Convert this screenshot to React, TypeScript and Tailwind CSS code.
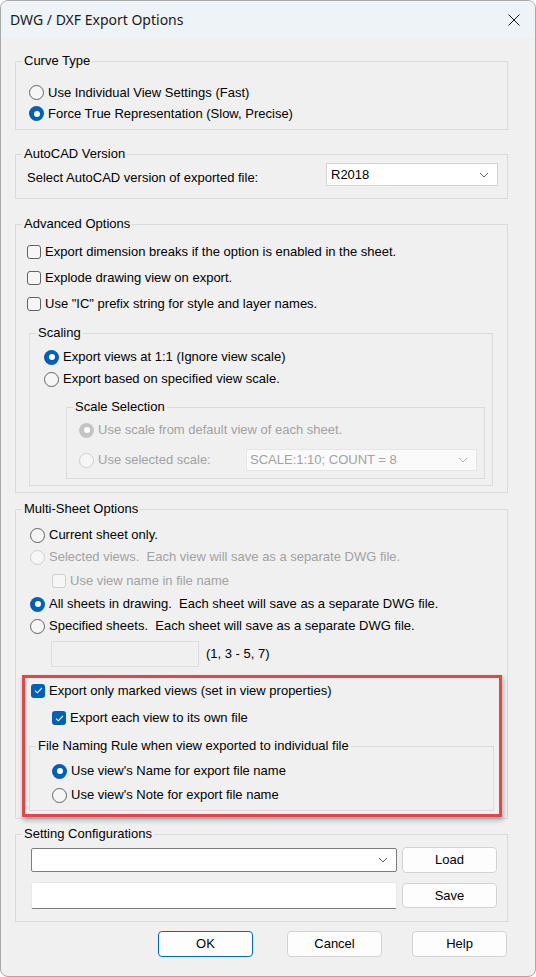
import type { ReactNode } from 'react';

const Radio = ({ checked = false, disabled = false }: { checked?: boolean; disabled?: boolean }) => {
  if (checked && disabled) {
    return (
      <span className="flex h-[15px] w-[15px] shrink-0 items-center justify-center rounded-full bg-[#c4c4c4]">
        <span className="h-[6px] w-[6px] rounded-full bg-white" />
      </span>
    );
  }
  if (checked) {
    return (
      <span className="flex h-[15px] w-[15px] shrink-0 items-center justify-center rounded-full bg-[#005fb8]">
        <span className="h-[6px] w-[6px] rounded-full bg-white" />
      </span>
    );
  }
  if (disabled) {
    return <span className="h-[15px] w-[15px] shrink-0 rounded-full border border-[#cfcfcf] bg-[#f6f6f6]" />;
  }
  return <span className="h-[15px] w-[15px] shrink-0 rounded-full border border-[#626262] bg-[#f6f6f6]" />;
};

const Check = ({ checked = false, disabled = false }: { checked?: boolean; disabled?: boolean }) => {
  if (checked) {
    return (
      <span className="flex h-[14px] w-[14px] shrink-0 items-center justify-center rounded-[3px] bg-[#005fb8]">
        <svg width="9" height="7" viewBox="0 0 9 7" fill="none">
          <path d="M1 3.6 3.3 5.8 8 1" stroke="white" strokeWidth="1.1" />
        </svg>
      </span>
    );
  }
  if (disabled) {
    return <span className="h-[14px] w-[14px] shrink-0 rounded-[3px] border border-[#cfcfcf] bg-[#f6f6f6]" />;
  }
  return <span className="h-[14px] w-[14px] shrink-0 rounded-[3px] border border-[#626262] bg-[#f6f6f6]" />;
};

const Chevron = ({ color = '#606060' }: { color?: string }) => (
  <svg width="10" height="6" viewBox="0 0 10 6" fill="none">
    <path d="M1 1l4 4 4-4" stroke={color} strokeWidth="1" />
  </svg>
);

const Group = ({ title, className, children }: { title: string; className: string; children: ReactNode }) => (
  <fieldset className={`border border-[#dadada] ${className}`}>
    <legend className="ml-[6px] px-[2px] leading-[16px]">{title}</legend>
    {children}
  </fieldset>
);

const Option = ({ control, label, disabled = false, className = '' }: { control: ReactNode; label: string; disabled?: boolean; className?: string }) => (
  <div className={`flex items-center gap-[4px] ${className}`}>
    {control}
    <span className={disabled ? 'whitespace-pre text-[#a2a2a2]' : 'whitespace-pre'}>{label}</span>
  </div>
);

const Button = ({ label, primary = false, className = '' }: { label: string; primary?: boolean; className?: string }) => (
  <button
    className={`flex w-[95px] items-center justify-center rounded-[4px] border bg-[#fdfdfd] ${
      primary ? 'border-[#0067c0]' : 'border-[#d3d3d3]'
    } ${className}`}
  >
    {label}
  </button>
);

export default function App() {
  return (
    <div className="h-[977px] w-[536px] bg-white">
      <div className="flex h-[977px] w-[536px] flex-col overflow-hidden rounded-[8px] border border-[#a8a8a8] bg-[#f0f0f0] font-['Liberation_Sans',Arial,sans-serif] text-[13px] text-black">
        <div className="flex h-[37px] shrink-0 items-center justify-between bg-[#eef3f8] pl-[9px] pr-[15px]">
          <span className="font-['Noto_Sans',sans-serif] text-[14px] text-[#1a1a1a]">DWG / DXF Export Options</span>
          <svg width="12" height="12" viewBox="0 0 12 12" fill="none">
            <path d="M0.5 0.5l11 11M11.5 0.5l-11 11" stroke="#1a1a1a" strokeWidth="1" />
          </svg>
        </div>

        <div className="flex-1 pl-[14px]">
          <Group title="Curve Type" className="mt-[15px] w-[493px]">
            <div className="pb-[5px] pl-[13px] pt-[13px]">
              <Option className="h-[21px]" control={<Radio />} label="Use Individual View Settings (Fast)" />
              <Option className="h-[21px]" control={<Radio checked />} label="Force True Representation (Slow, Precise)" />
            </div>
          </Group>

          <Group title="AutoCAD Version" className="mt-[16px] w-[493px]">
            <div className="box-content flex h-[23px] items-center pb-[12px] pl-[11px] pt-[1px]">
              <span className="mt-[6px]">Select AutoCAD version of exported file:</span>
              <div className="ml-auto mr-[9px] flex h-[23px] w-[172px] items-center justify-between border border-[#d4d4d4] bg-white pl-[4px] pr-[8px]">
                <span>R2018</span>
                <Chevron />
              </div>
            </div>
          </Group>

          <Group title="Advanced Options" className="mt-[17px] w-[493px]">
            <div className="pb-[6px] pt-[7px]">
              <div className="pl-[11px]">
                <Option className="h-[26px]" control={<Check />} label="Export dimension breaks if the option is enabled in the sheet." />
                <Option className="h-[26px]" control={<Check />} label="Explode drawing view on export." />
                <Option className="h-[26px]" control={<Check />} label={'Use "IC" prefix string for style and layer names.'} />
              </div>
              <Group title="Scaling" className="ml-[13px] mr-[14px] mt-[8px]">
                <div className="pb-[6px] pt-[5px]">
                  <div className="pl-[14px]">
                    <Option className="h-[22px]" control={<Radio checked />} label="Export views at 1:1 (Ignore view scale)" />
                    <Option className="h-[22px]" control={<Radio />} label="Export based on specified view scale." />
                  </div>
                  <Group title="Scale Selection" className="ml-[36px] mr-[7px] mt-[9px]">
                    <div className="pb-[7px] pl-[12px] pt-[4px]">
                      <Option className="h-[22px]" control={<Radio checked disabled />} label="Use scale from default view of each sheet." disabled />
                      <div className="mt-[8px] flex h-[22px] items-center">
                        <Option control={<Radio disabled />} label="Use selected scale:" disabled />
                        <div className="ml-auto mr-[7px] flex h-[22px] w-[231px] items-center justify-between border border-[#e6e6e6] bg-[#fafafa] pl-[3px] pr-[8px] text-[#a2a2a2]">
                          <span>SCALE:1:10; COUNT = 8</span>
                          <Chevron color="#b4b4b4" />
                        </div>
                      </div>
                    </div>
                  </Group>
                </div>
              </Group>
            </div>
          </Group>

          <Group title="Multi-Sheet Options" className="mt-[8px] w-[493px]">
            <div className="pb-[1px] pt-[7px]">
              <div className="pl-[14px]">
                <Option className="h-[22px]" control={<Radio />} label="Current sheet only." />
                <Option className="h-[22px]" control={<Radio disabled />} label="Selected views.  Each view will save as a separate DWG file." disabled />
              </div>
              <Option className="mt-[2px] h-[22px] pl-[36px]" control={<Check disabled />} label="Use view name in file name" disabled />
              <div className="mt-[1px] pl-[14px]">
                <Option className="h-[22px]" control={<Radio checked />} label="All sheets in drawing.  Each sheet will save as a separate DWG file." />
                <Option className="h-[22px]" control={<Radio />} label="Specified sheets.  Each sheet will save as a separate DWG file." />
              </div>
              <div className="mt-[4px] flex h-[26px] items-center pl-[35px]">
                <div className="h-[26px] w-[148px] border border-[#dedede] bg-[#f0f0f0]" />
                <span className="ml-[7px]">(1, 3 - 5, 7)</span>
              </div>

              <div className="ml-[6px] mt-[8px] w-[480px] border-[3px] border-[#ea4343] pb-[3px] shadow-[1px_3px_5px_rgba(0,0,0,0.3)]">
                <Option className="ml-[6px] mt-[2px] h-[21px]" control={<Check checked />} label="Export only marked views (set in view properties)" />
                <Option className="ml-[27px] mt-[6px] h-[22px]" control={<Check checked />} label="Export each view to its own file" />
                <Group title="File Naming Rule when view exported to individual file" className="ml-[4px] mr-[5px] mt-[9px]">
                  <div className="pb-[3px] pl-[22px] pt-[5px]">
                    <Option className="h-[24px]" control={<Radio checked />} label="Use view's Name for export file name" />
                    <Option className="h-[24px]" control={<Radio />} label="Use view's Note for export file name" />
                  </div>
                </Group>
              </div>
            </div>
          </Group>

          <Group title="Setting Configurations" className="mt-[7px] w-[493px]">
            <div className="pb-[12px] pl-[15px] pt-[5px]">
              <div className="flex h-[26px] items-center gap-[5px]">
                <div className="flex h-[24px] w-[366px] items-center justify-end rounded-[2px] border border-[#7c7c7c] bg-white pr-[8px]">
                  <Chevron />
                </div>
                <Button label="Load" className="h-[26px]" />
              </div>
              <div className="mt-[9px] flex h-[27px] items-center gap-[5px]">
                <div className="h-[27px] w-[366px] rounded-[2px] border border-[#e8e8e8] border-b-[#7c7c7c] bg-white" />
                <Button label="Save" className="h-[25px]" />
              </div>
            </div>
          </Group>

          <div className="ml-[143px] mt-[9px] flex h-[26px] items-center">
            <Button label="OK" primary className="h-[26px]" />
            <Button label="Cancel" className="ml-[34px] h-[26px]" />
            <Button label="Help" className="ml-[30px] h-[26px]" />
          </div>
        </div>
      </div>
    </div>
  );
}
